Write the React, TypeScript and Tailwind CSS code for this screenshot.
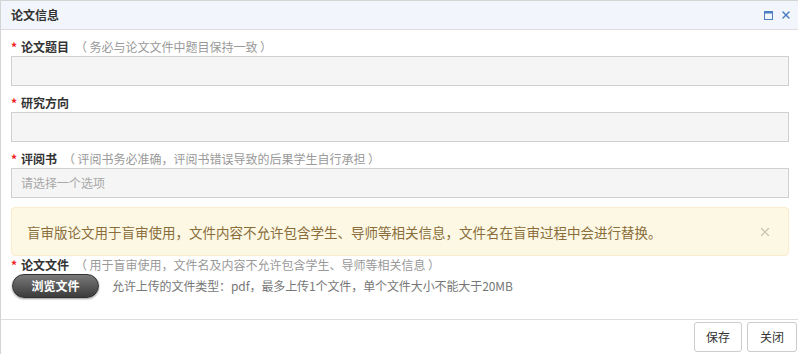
import { X } from 'lucide-react';

const font = { fontFamily: '"Microsoft YaHei", "Noto Sans CJK SC", "Liberation Sans", sans-serif' };

function Label({ text, hint }: { text: string; hint?: string }) {
  return (
    <div className="flex items-center h-[18px] text-[12px] leading-[18px]">
      <span className="text-[#e22] mr-[4px] font-bold">*</span>
      <span className="font-bold text-[#333]">{text}</span>
      {hint && <span className="ml-[6px] text-[#999]">（{'\u2009'}{hint}{'\u2009'}）</span>}
    </div>
  );
}

export default function App() {
  return (
    <div className="w-[798px] h-[354px] bg-white border-l border-t border-[#d4d4d4] flex flex-col text-[#333] overflow-hidden" style={font}>
      {/* header */}
      <div className="h-[29px] shrink-0 bg-[#f2f6fc] border-b border-[#dcdcdc] flex items-center justify-between pl-[10px] pr-[6px]">
        <span className="text-[12px] leading-[16px] font-bold text-[#333]">论文信息</span>
        <div className="flex items-center gap-[7px]">
          <svg width="9" height="9" viewBox="0 0 9 9">
            <rect x="0.5" y="0.5" width="8" height="8" fill="none" stroke="#4a7fc1" />
            <rect x="0" y="0" width="9" height="2.5" fill="#4a7fc1" />
          </svg>
          <X size={12} strokeWidth={3} className="text-[#4a7fc1]" />
        </div>
      </div>

      {/* body */}
      <div className="flex-1 min-h-0 pl-[10px] pr-[9px] pt-[8px] overflow-hidden">
        <Label text="论文题目" hint="务必与论文文件中题目保持一致" />
        <div className="h-[30px] border border-[#d0d0d0] bg-[#f5f5f5]" />

        <div className="mt-[8px]">
          <Label text="研究方向" />
        </div>
        <div className="h-[30px] border border-[#d0d0d0] bg-[#f5f5f5]" />

        <div className="mt-[8px]">
          <Label text="评阅书" hint="评阅书务必准确，评阅书错误导致的后果学生自行承担" />
        </div>
        <div className="h-[30px] border border-[#d0d0d0] bg-[#f5f5f5] flex items-center pl-[9px] text-[12px] leading-[16px] text-[#a8a8a8]">
          请选择一个选项
        </div>

        <div className="h-[49px] mt-[9px] rounded-[4px] border border-[#faebcc] bg-[#fcf8e3] flex items-center justify-between pl-[15px] pr-[16px]">
          <span className="text-[13.5px] leading-[20px] text-[#8a6d3b]">盲审版论文用于盲审使用，文件内容不允许包含学生、导师等相关信息，文件名在盲审过程中会进行替换。</span>
          <X size={14} strokeWidth={2} className="text-[#c9c0ad]" />
        </div>

        <Label text="论文文件" hint="用于盲审使用，文件名及内容不允许包含学生、导师等相关信息" />
        <div className="flex items-center">
          <button className="ml-[1px] w-[87px] h-[24px] rounded-full bg-gradient-to-b from-[#7a7a7a] to-[#3c3c3c] border border-[#333] shadow-[0_1px_2px_rgba(0,0,0,0.4)] text-white text-[12px] leading-[16px] font-bold">
            浏览文件
          </button>
          <span className="ml-[13px] text-[12px] leading-[16px] text-[#777] tracking-[-0.1px]">允许上传的文件类型：pdf，最多上传1个文件，单个文件大小不能大于20MB</span>
        </div>
      </div>

      {/* footer */}
      <div className="h-[35px] shrink-0 border-t border-[#ddd] flex items-start justify-end gap-[5px] pt-[2px] pr-[1px]">
        <button className="w-[48px] h-[30px] border border-[#ccc] rounded-[3px] bg-white text-[12px] leading-[16px] text-[#333]">保存</button>
        <button className="w-[50px] h-[30px] border border-[#ccc] rounded-[3px] bg-white text-[12px] leading-[16px] text-[#333]">关闭</button>
      </div>
    </div>
  );
}
